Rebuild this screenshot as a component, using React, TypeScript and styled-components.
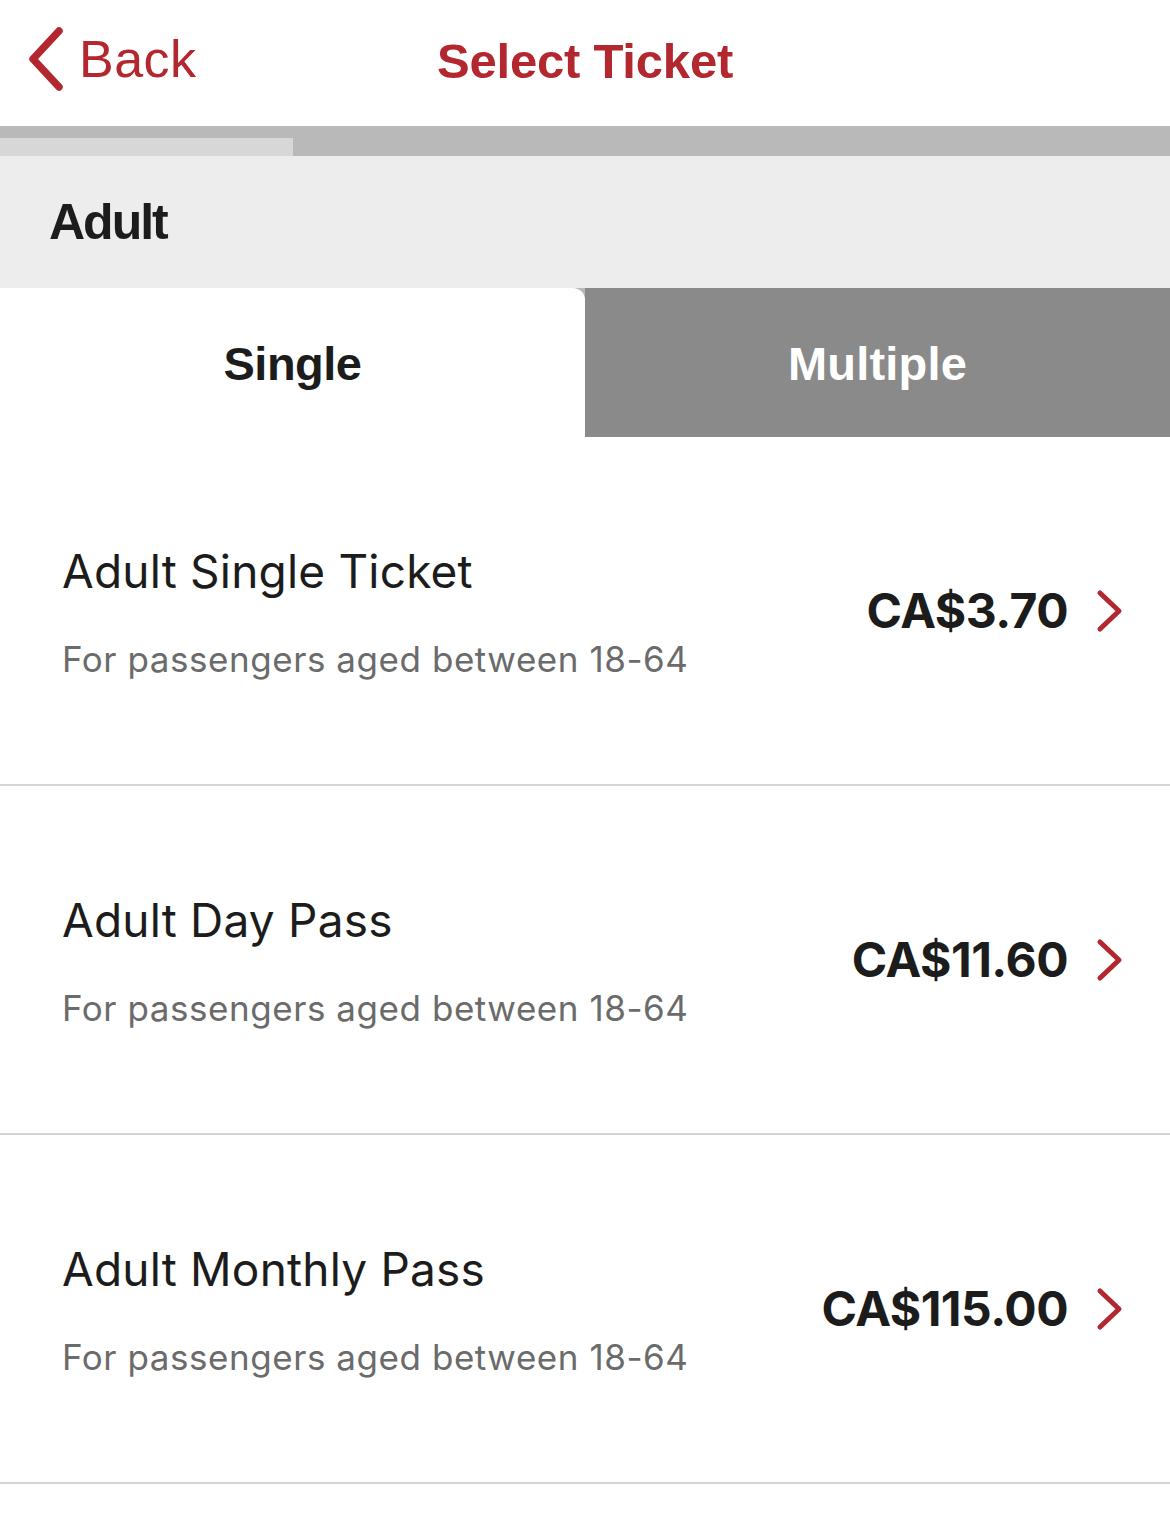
import React from 'react';
import styled, { createGlobalStyle } from 'styled-components';

const RED = '#b3272f';

type Ticket = {
  title: string;
  subtitle: string;
  price: string;
};

const tickets: Ticket[] = [
  { title: 'Adult Single Ticket', subtitle: 'For passengers aged between 18-64', price: 'CA$3.70' },
  { title: 'Adult Day Pass', subtitle: 'For passengers aged between 18-64', price: 'CA$11.60' },
  { title: 'Adult Monthly Pass', subtitle: 'For passengers aged between 18-64', price: 'CA$115.00' },
];

const GlobalStyle = createGlobalStyle`
  html, body {
    margin: 0;
    padding: 0;
    background: #ffffff;
  }
  body {
    font-family: 'Liberation Sans', Arial, sans-serif;
    -webkit-font-smoothing: antialiased;
  }
`;

const BackChevron = () => (
  <svg width="40" height="66" viewBox="0 0 40 66" fill="none">
    <path d="M33 5 L7 33 L33 61" stroke={RED} strokeWidth="7.5" strokeLinecap="round" strokeLinejoin="round" />
  </svg>
);

const RowChevron = () => (
  <svg width="28" height="44" viewBox="0 0 28 44" fill="none">
    <path d="M4 4 L23 22 L4 40" stroke={RED} strokeWidth="5" strokeLinecap="round" strokeLinejoin="round" />
  </svg>
);

const App: React.FC = () => {
  return (
    <>
      <GlobalStyle />
      <Page>
        <NavBar>
          <BackButton>
            <BackChevron />
            <BackLabel>Back</BackLabel>
          </BackButton>
          <NavTitle>Select Ticket</NavTitle>
        </NavBar>
        <ProgressTrack>
          <ProgressFill style={{ width: `${(1 / 4) * 100}%` }} />
        </ProgressTrack>
        <SectionHeader>Adult</SectionHeader>
        <TabRow>
          <Tab active>Single</Tab>
          <Tab>Multiple</Tab>
        </TabRow>
        <TicketList>
          {tickets.map((t) => (
            <TicketRow key={t.title}>
              <TicketInfo>
                <TicketTitle>{t.title}</TicketTitle>
                <TicketSubtitle>{t.subtitle}</TicketSubtitle>
              </TicketInfo>
              <PriceGroup>
                <Price>{t.price}</Price>
                <RowChevron />
              </PriceGroup>
            </TicketRow>
          ))}
        </TicketList>
      </Page>
    </>
  );
};

const Page = styled.div`
  width: 1170px;
  min-height: 1519px;
  background: #ffffff;
  display: flex;
  flex-direction: column;
`;

const NavBar = styled.div`
  position: relative;
  height: 126px;
  display: flex;
  align-items: center;
  justify-content: center;
  box-sizing: border-box;
`;

const BackButton = styled.div`
  position: absolute;
  left: 26px;
  top: 26px;
  display: flex;
  align-items: center;
  gap: 13px;
`;

const BackLabel = styled.span`
  color: ${RED};
  font-size: 52px;
  line-height: 66px;
  letter-spacing: 0.5px;
  font-family: 'Liberation Sans', Arial, sans-serif;
`;

const NavTitle = styled.h1`
  margin: 0 0 4px 0;
  color: ${RED};
  font-size: 49px;
  font-weight: 700;
  letter-spacing: -0.2px;
  font-family: 'Liberation Sans', Arial, sans-serif;
`;

const ProgressTrack = styled.div`
  height: 30px;
  background: #b9b9b9;
  display: flex;
  align-items: flex-end;
`;

const ProgressFill = styled.div`
  height: 18px;
  background: #d7d7d7;
`;

const SectionHeader = styled.div`
  height: 132px;
  background: #ededed;
  display: flex;
  align-items: center;
  padding-left: 49px;
  font-size: 50px;
  font-weight: 700;
  letter-spacing: -2px;
  color: #1c1c1c;
`;

const TabRow = styled.div`
  display: flex;
  height: 149px;
  background: #b9b9b9;
`;

const Tab = styled.div<{ active?: boolean }>`
  flex: 1;
  display: flex;
  align-items: center;
  justify-content: center;
  font-size: 47px;
  font-weight: 700;
  letter-spacing: ${(p) => (p.active ? '-0.5px' : '0.2px')};
  padding-top: 2px;
  box-sizing: border-box;
  color: ${(p) => (p.active ? '#1c1c1c' : '#ffffff')};
  background: ${(p) => (p.active ? '#ffffff' : '#8a8a8a')};
  border-top-right-radius: ${(p) => (p.active ? '12px' : '0')};
`;

const TicketList = styled.div`
  display: flex;
  flex-direction: column;
`;

const TicketRow = styled.div`
  height: 349px;
  box-sizing: border-box;
  border-bottom: 2px solid #d4d4d4;
  display: flex;
  align-items: center;
  justify-content: space-between;
  padding: 0 46px 0 62px;
`;

const TicketInfo = styled.div`
  display: flex;
  flex-direction: column;
  gap: 38px;
  margin-top: 2px;
`;

const TicketTitle = styled.div`
  font-family: Inter, 'Noto Sans', sans-serif;
  font-size: 46px;
  color: #1c1c1c;
  line-height: 56px;
  letter-spacing: 0.2px;
`;

const TicketSubtitle = styled.div`
  font-family: Inter, 'Noto Sans', sans-serif;
  font-size: 35px;
  color: #6b6b6b;
  line-height: 44px;
  letter-spacing: 0.55px;
`;

const PriceGroup = styled.div`
  display: flex;
  align-items: center;
  gap: 28px;
`;

const Price = styled.div`
  font-family: Inter, 'Noto Sans', sans-serif;
  font-size: 48px;
  font-weight: 700;
  color: #1c1c1c;
  letter-spacing: -0.5px;
`;

export default App;
